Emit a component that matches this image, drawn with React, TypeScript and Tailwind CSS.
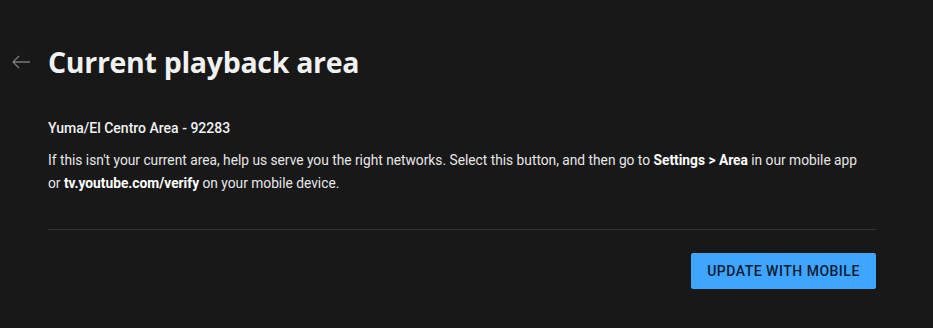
export default function App() {
  return (
    <main className="min-h-screen w-full bg-[#181818] text-white" style={{ fontFamily: "Roboto, 'Liberation Sans', sans-serif" }}>
      <div className="relative pl-[48px] pr-[57px] pt-[44px]">
        <button className="absolute left-[10px] top-[52px] flex h-[20px] w-[22px] items-center justify-center text-[#7a7a7a]" aria-label="Back">
          <svg width="20" height="14" viewBox="0 0 20 14" fill="none" stroke="currentColor" strokeWidth="1.3">
            <path d="M19 7H2M8 1L2 7l6 6" />
          </svg>
        </button>
        <h1 className="text-[28.5px] font-bold leading-[36px] tracking-[-0.3px] text-[#f1f1f1]" style={{ fontFamily: "'Open Sans', Lato, sans-serif" }}>
          Current playback area
        </h1>

        <p className="mt-[39px] text-[14px] font-medium leading-[18px] text-[#f1f1f1]">Yuma/El Centro Area - 92283</p>
        <p className="mt-[12px] text-[13.75px] leading-[23px] text-[#e6e6e6]">
          If this isn't your current area, help us serve you the right networks. Select this button, and then go to{" "}
          <span className="font-bold text-white">Settings &gt; Area</span> in our mobile app
          <br />
          or <span className="font-bold text-white">tv.youtube.com/verify</span> on your mobile device.
        </p>

        <div className="mt-[34px] h-px w-full bg-[#333333]" />

        <div className="mt-[23px] flex justify-end">
          <button className="h-[36px] w-[185px] rounded-[2px] bg-[#3ea6ff] text-[14px] font-medium tracking-[0.5px] text-[#0b1a33]">
            UPDATE WITH MOBILE
          </button>
        </div>
      </div>
    </main>
  );
}
